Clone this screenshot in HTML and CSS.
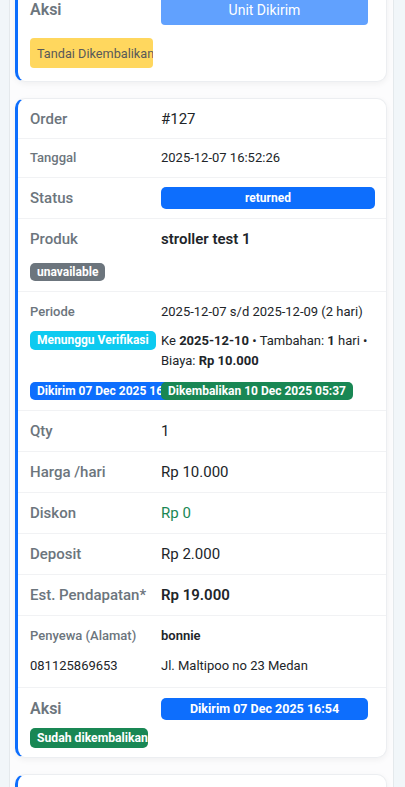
FILE: index.html
```html
<!DOCTYPE html>
<html lang="id">
<head>
  <meta charset="UTF-8" />
  <meta name="viewport" content="width=device-width, initial-scale=1.0"/>
  <title>Order Sewa</title>
  <link rel="stylesheet" href="styles.css">
</head>
<body>
  <div class="panel">
    <div class="order-list">

      <!-- order sebelumnya (terpotong scroll) -->
      <div class="order-card">
        <div class="row row-actions row-actions-lg">
          <div class="label label-aksi">Aksi</div>
          <div class="cell"><button class="btn btn-sent" disabled>Unit Dikirim</button></div>
          <div class="cell"><button class="btn btn-return" disabled>Tandai Dikembalikan</button></div>
        </div>
      </div>

      <!-- order #127 -->
      <div class="order-card">
        <div class="row row-first">
          <div class="label">Order</div>
          <div class="value">#127</div>
        </div>
        <div class="row row-sm">
          <div class="label">Tanggal</div>
          <div class="value">2025-12-07 16:52:26</div>
        </div>
        <div class="row row-status">
          <div class="label">Status</div>
          <div class="cell"><span class="badge badge-block bg-primary">returned</span></div>
        </div>
        <div class="row row-produk">
          <div class="label">Produk</div>
          <div class="value strong">stroller test 1</div>
          <div class="cell full"><span class="badge bg-secondary">unavailable</span></div>
        </div>
        <div class="row row-sm row-periode">
          <div class="label">Periode</div>
          <div class="value">2025-12-07 s/d 2025-12-09 (2 hari)</div>
          <div class="cell top"><span class="badge badge-tall bg-info">Menunggu Verifikasi</span></div>
          <div class="value ext">Ke <b>2025-12-10</b> &bull; Tambahan: <b>1</b> hari &bull; Biaya: <b>Rp 10.000</b></div>
          <span class="badge badge-wide bg-primary">Dikirim 07 Dec 2025 16:54</span>
          <span class="badge badge-wide bg-success">Dikembalikan 10 Dec 2025 05:37</span>
        </div>
        <div class="row">
          <div class="label">Qty</div>
          <div class="value">1</div>
        </div>
        <div class="row">
          <div class="label">Harga /hari</div>
          <div class="value">Rp 10.000</div>
        </div>
        <div class="row">
          <div class="label">Diskon</div>
          <div class="value text-success">Rp 0</div>
        </div>
        <div class="row">
          <div class="label">Deposit</div>
          <div class="value">Rp 2.000</div>
        </div>
        <div class="row">
          <div class="label">Est. Pendapatan*</div>
          <div class="value strong">Rp 19.000</div>
        </div>
        <div class="row row-sm row-penyewa">
          <div class="label">Penyewa (Alamat)</div>
          <div class="value strong">bonnie</div>
          <div class="value">081125869653</div>
          <div class="value">Jl. Maltipoo no 23 Medan</div>
        </div>
        <div class="row row-actions row-actions-last">
          <div class="label label-aksi">Aksi</div>
          <div class="cell"><span class="badge badge-btn bg-primary">Dikirim 07 Dec 2025 16:54</span></div>
          <div class="cell"><span class="badge badge-done bg-success">Sudah dikembalikan</span></div>
        </div>
      </div>

      <!-- order berikutnya -->
      <div class="order-card order-stub"></div>

    </div>
  </div>
</body>
</html>
```

FILE: styles.css
```css
/* Reset */
* {
  box-sizing: border-box;
}

body {
  margin: 0;
  background: #f1f6f9;
  font-family: Roboto, 'Noto Sans', sans-serif;
  color: #212529;
}

/* Panel putih di tengah */
.panel {
  margin: 0 11px 0 9px;
  height: 787px;
  overflow: hidden;
  background: #fcfcfd;
  border-left: 1px solid #e4e9ec;
  border-right: 1px solid #e4e9ec;
  padding: 0 6px 0 5px;
}

.order-list {
  margin-top: -16px;
  display: flex;
  flex-direction: column;
  gap: 16px;
}

/* Kartu order */
.order-card {
  background: #fff;
  border: 1px solid #eceef1;
  border-left: 3px solid #0d6efd;
  border-radius: 10px;
  box-shadow: 0 2px 6px rgba(0,0,0,0.05);
}
.order-stub { height: 60px; }

.row {
  display: grid;
  grid-template-columns: 131px 1fr;
  align-items: center;
  padding: 10px 11px 10px 12px;
  border-bottom: 1px solid #f1f2f4;
}
.row:last-child { border-bottom: none; }
.row-first { padding-bottom: 9px; }
.row-status { padding-top: 9px; padding-bottom: 9px; }

.label {
  font-size: 15px;
  line-height: 20px;
  font-weight: 500;
  color: #6c757d;
  white-space: nowrap;
}
.value {
  font-size: 15px;
  line-height: 20px;
}
.cell { display: flex; }
.strong { font-weight: 600; }
.text-success { color: #198754; }

.row-sm .label,
.row-sm .value {
  font-size: 13px;
  line-height: 18px;
}

.full { grid-column: 1 / -1; }
.top { align-self: start; }

.row-produk { row-gap: 14px; }

.row-periode { row-gap: 10px; }
.row-periode .label,
.row-periode .value { line-height: 19px; }
.row-periode .ext { line-height: 20px; align-self: start; }
.row-periode .ext b { font-weight: 700; }
.row-periode .badge-wide { margin-top: 1px; }

.row-penyewa { row-gap: 10px; padding-bottom: 11px; }
.row-penyewa .value { line-height: 20px; }

/* Badges */
.badge {
  display: inline-block;
  font-size: 12px;
  font-weight: 700;
  color: #fff;
  line-height: 18px;
  padding: 0 7px;
  border-radius: 5px;
  white-space: nowrap;
}
.badge-block {
  flex: 1;
  text-align: center;
  line-height: 22px;
}
.badge-tall { line-height: 19px; }
.badge-wide {
  justify-self: start;
  width: max-content;
}
.bg-primary { background: #0d6efd; }
.bg-secondary { background: #6c757d; }
.bg-info { background: #0dcaf0; }
.bg-success { background: #198754; }

/* Aksi */
.row-actions {
  row-gap: 8px;
  padding-top: 9px;
  padding-bottom: 9px;
}
.row-actions-last { padding-top: 10px; }
.row-actions-lg {
  row-gap: 13px;
  padding-bottom: 13px;
}
.label-aksi {
  font-size: 16px;
  font-weight: 600;
}
.badge-btn {
  width: calc(100% - 7px);
  text-align: center;
  font-size: 12.5px;
  line-height: 22px;
}
.badge-done {
  width: 118px;
  overflow: hidden;
  font-size: 12.2px;
  line-height: 20px;
}

.btn {
  font-family: inherit;
  border: none;
  border-radius: 4px;
  white-space: nowrap;
  overflow: hidden;
}
.btn-sent {
  width: calc(100% - 7px);
  height: 31px;
  padding: 0;
  background: #61a1fe;
  color: #fff;
  font-size: 14px;
}
.btn-return {
  width: 123px;
  height: 30px;
  padding: 0 7px;
  text-align: left;
  background: #ffd75e;
  color: #595959;
  font-size: 12.7px;
}
```
